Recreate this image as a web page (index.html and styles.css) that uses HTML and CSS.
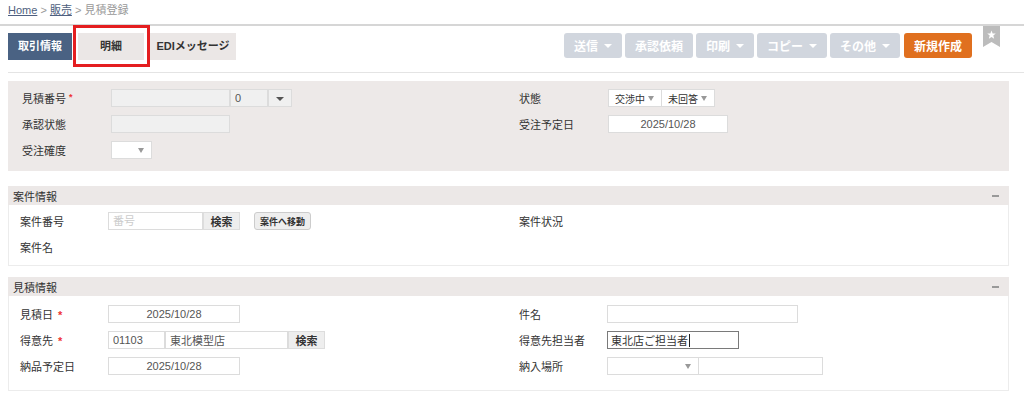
FILE: index.html
```html
<!DOCTYPE html>
<html>
<head>
    <meta charset="utf-8">
    <title>見積登録</title>
    <link rel="stylesheet" href="styles.css">
</head>
<body>

<div class="breadcrumb">
    <a href="#">Home</a> &gt; <a href="#">販売</a> &gt; <span class="current">見積登録</span>
</div>

<div class="toolbar">
    <div class="tabs">
        <a class="tab tab-deal active">取引情報</a>
        <a class="tab tab-detail marked">明細</a>
        <a class="tab tab-edi">EDIメッセージ</a>
    </div>
    <div class="actions">
        <button class="btn">送信<i class="caret"></i></button>
        <button class="btn">承認依頼</button>
        <button class="btn">印刷<i class="caret"></i></button>
        <button class="btn">コピー<i class="caret"></i></button>
        <button class="btn">その他<i class="caret"></i></button>
        <button class="btn primary">新規作成</button>
        <svg class="bookmark" width="17" height="21" viewBox="0 0 17 21">
            <path d="M0 0H17V21L8.5 16L0 21Z" fill="#bcbcbc"/>
            <path d="M8.5 4.5L9.62 7.46L12.78 7.61L10.31 9.59L11.15 12.64L8.5 10.9L5.850 12.64L6.69 9.59L4.22 7.61L7.38 7.46Z" fill="#fff"/>
        </svg>
    </div>
</div>

<div class="page">

    <div class="summary">
        <div class="field">
            <label>見積番号<span class="req small">*</span></label>
            <input class="input readonly w-119" value="">
            <input class="input readonly w-38" value="0">
            <span class="drop-btn"><i class="caret"></i></span>
        </div>
        <div class="field">
            <label>状態</label>
            <span class="select w-54">交渉中<i class="caret"></i></span>
            <span class="select w-53">未回答<i class="caret"></i></span>
        </div>
        <div class="field">
            <label>承認状態</label>
            <input class="input readonly w-119" value="">
        </div>
        <div class="field">
            <label>受注予定日</label>
            <input class="input date w-120" value="2025/10/28">
        </div>
        <div class="field">
            <label>受注確度</label>
            <span class="select w-41"><i class="caret"></i></span>
        </div>
    </div>

    <div class="block">
        <div class="block-head">案件情報<span class="collapse"></span></div>
        <div class="block-body">
            <div class="field">
                <label>案件番号</label>
                <input class="input w-95" placeholder="番号">
                <button class="btn-sm w-37">検索</button>
                <button class="btn-sm btn-move w-57">案件へ移動</button>
            </div>
            <div class="field">
                <label>案件状況</label>
            </div>
            <div class="field">
                <label>案件名</label>
            </div>
        </div>
    </div>

    <div class="block">
        <div class="block-head">見積情報<span class="collapse"></span></div>
        <div class="block-body tall">
            <div class="field">
                <label>見積日<span class="req">*</span></label>
                <input class="input date w-132" value="2025/10/28">
            </div>
            <div class="field">
                <label>件名</label>
                <input class="input w-191" value="">
            </div>
            <div class="field">
                <label>得意先<span class="req">*</span></label>
                <input class="input w-57" value="01103">
                <input class="input w-123" value="東北模型店">
                <button class="btn-sm w-37">検索</button>
            </div>
            <div class="field">
                <label>得意先担当者</label>
                <span class="input focused w-132">東北店ご担当者<i class="cursor"></i></span>
            </div>
            <div class="field">
                <label>納品予定日</label>
                <input class="input date w-132" value="2025/10/28">
            </div>
            <div class="field">
                <label>納入場所</label>
                <span class="select w-92"><i class="caret"></i></span>
                <input class="input w-124" value="">
            </div>
        </div>
    </div>

</div>

</body>
</html>
```

FILE: styles.css
```css
:root {
    --font: "Liberation Sans", "Noto Sans CJK JP", sans-serif;
    --text: #333;
    --panel: #ede9e8;
    --line: #dcdcdc;
}

* {
    box-sizing: border-box;
}

body {
    margin: 0;
    font-family: var(--font);
    font-size: 11px;
    color: var(--text);
    background: #fff;
}

/* breadcrumb */
.breadcrumb {
    height: 26px;
    padding: 0 8px;
    line-height: 20px;
    color: #999;
    border-bottom: 2px solid #d6d6d6;
}

.breadcrumb a {
    color: #4e5f80;
    text-decoration: underline;
}

/* tabs + action buttons */
.toolbar {
    display: flex;
    justify-content: space-between;
    align-items: flex-start;
    height: 47px;
    margin-left: 8px;
    padding-right: 24px;
    border-bottom: 1px solid #e4e4e4;
}

.tabs {
    display: flex;
    gap: 6px;
    margin-top: 7px;
}

.tab {
    height: 27px;
    line-height: 27px;
    text-align: center;
    font-weight: bold;
    background: #ebe7e6;
    color: var(--text);
}

.tab-deal { width: 64px; }
.tab-detail { width: 66px; }
.tab-edi { width: 86px; }

.tab.active {
    background: #4a6283;
    color: #fff;
}

.tab.marked {
    position: relative;
}

.tab.marked::after {
    content: "";
    position: absolute;
    top: -8px;
    left: -5px;
    right: -6px;
    bottom: -7px;
    border: 3px solid #e41e20;
}

.actions {
    display: flex;
    align-items: flex-start;
    gap: 3px;
}

.btn {
    display: flex;
    align-items: center;
    height: 25px;
    margin-top: 7px;
    padding: 0 10px;
    border: none;
    border-radius: 3px;
    background: #d1d6de;
    color: #fff;
    font-family: var(--font);
    font-size: 12px;
    font-weight: bold;
    white-space: nowrap;
}

.btn.primary {
    margin-left: 1px;
    background: #e0701f;
}

.caret {
    display: inline-block;
    width: 0;
    height: 0;
    margin-left: 6px;
    border-left: 4px solid transparent;
    border-right: 4px solid transparent;
    border-top: 4px solid currentColor;
}

.bookmark {
    margin-left: 8px;
}

/* content */
.page {
    padding: 0 15px 0 8px;
}

.summary {
    display: grid;
    grid-template-columns: 497px 1fr;
    grid-auto-rows: 18px;
    row-gap: 8px;
    margin-top: 8px;
    padding: 8px 14px 12px;
    background: var(--panel);
}

.field {
    display: flex;
    align-items: center;
}

.field label {
    flex: none;
    width: 89px;
}

.block .field label {
    width: 88px;
}

.req {
    color: #e33;
    margin-left: 5px;
    font-weight: bold;
}

.req.small {
    font-size: 9px;
    vertical-align: 3px;
    margin-left: 3px;
}

.input {
    height: 18px;
    margin: 0;
    padding: 0 4px;
    border: 1px solid var(--line);
    background: #fff;
    color: #555;
    font-family: var(--font);
    font-size: 11px;
    outline: none;
}

.input::placeholder {
    color: #ccc;
}

.input.readonly {
    background: #f0f0f0;
}

.input.date {
    text-align: center;
}

.input.focused {
    display: flex;
    align-items: center;
    padding-left: 3px;
    border-color: #7a7a7a;
    color: #333;
    white-space: nowrap;
}

.cursor {
    width: 1px;
    height: 13px;
    margin-left: 1px;
    background: #222;
}

.drop-btn {
    display: flex;
    align-items: center;
    justify-content: center;
    width: 24px;
    height: 18px;
    border: 1px solid var(--line);
    background: #f0f0f0;
    color: #555;
}

.drop-btn .caret {
    margin: 2px 0 0;
}

.select {
    display: flex;
    align-items: center;
    height: 18px;
    padding: 0 7px 0 6px;
    border: 1px solid var(--line);
    background: #fff;
    font-size: 10px;
    white-space: nowrap;
}

.select + .select,
.select + .input {
    border-left: none;
}

.select .caret {
    margin-left: auto;
    border-left-width: 3px;
    border-right-width: 3px;
    border-top: 5px solid #999;
}

.btn-sm {
    height: 18px;
    padding: 0;
    border: 1px solid #ddd;
    background: #eee;
    color: var(--text);
    font-family: var(--font);
    font-size: 11px;
    font-weight: bold;
}

.btn-move {
    margin-left: 14px;
    border-color: #ccc;
    border-radius: 3px;
    font-size: 9px;
}

/* collapsible blocks */
.block {
    margin-top: 15px;
}

.block + .block {
    margin-top: 11px;
}

.block-head {
    display: flex;
    justify-content: space-between;
    align-items: center;
    height: 19px;
    padding: 0 10px 0 5px;
    background: #ece8e7;
}

.collapse {
    width: 7px;
    height: 2px;
    background: #999;
}

.block-body {
    display: grid;
    grid-template-columns: 499px 1fr;
    grid-auto-rows: 18px;
    row-gap: 8px;
    padding: 7px 0 9px 11px;
    border: 1px solid #ececec;
    border-top: none;
}

.block-body.tall {
    padding: 9px 0 15px 11px;
}

/* field widths */
.w-37 { width: 37px; }
.w-38 { width: 38px; }
.w-41 { width: 41px; }
.w-53 { width: 53px; }
.w-54 { width: 54px; }
.w-57 { width: 57px; }
.w-92 { width: 92px; }
.w-95 { width: 95px; }
.w-119 { width: 119px; }
.w-120 { width: 120px; }
.w-123 { width: 123px; }
.w-124 { width: 124px; }
.w-132 { width: 132px; }
.w-191 { width: 191px; }
```
